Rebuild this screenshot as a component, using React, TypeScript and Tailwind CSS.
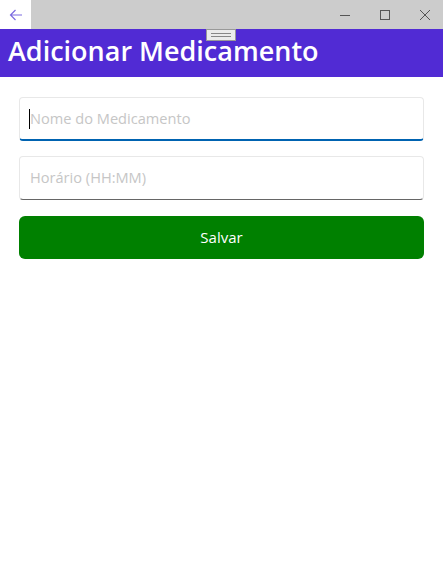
import React from "react";

const TitleBar = () => {
    return (
        <div className="flex h-[29px] items-stretch bg-[#cccccc]">
            <div className="flex w-[31px] items-center justify-center bg-white">
                <svg width="14" height="12" viewBox="0 0 14 12" fill="none" stroke="#7b6be0" strokeWidth="1.2">
                    <path d="M13 6H1.5M6.5 1L1.5 6l5 5" />
                </svg>
            </div>
            <div className="flex flex-1 items-center justify-end gap-[30px] pr-[13px]">
                <svg width="10" height="10" viewBox="0 0 10 10" stroke="#555" strokeWidth="1">
                    <path d="M0 5.5h10" />
                </svg>
                <svg width="10" height="10" viewBox="0 0 10 10" fill="none" stroke="#555" strokeWidth="1">
                    <rect x="0.5" y="0.5" width="9" height="9" />
                </svg>
                <svg width="10" height="10" viewBox="0 0 10 10" stroke="#555" strokeWidth="1">
                    <path d="M0 0l10 10M10 0L0 10" />
                </svg>
            </div>
        </div>
    )
}

const App = () => {
    return (
        <div className="h-[578px] w-[443px] bg-white font-['Open_Sans',sans-serif]">
            <TitleBar />

            <header className="relative h-[48px] bg-[#512bd4] pl-[8px]">
                <h1 className="pt-[2px] text-[27px] leading-[40px] font-semibold text-white">Adicionar Medicamento</h1>
                <div className="absolute top-0 left-[206px] flex h-[12px] w-[30px] flex-col items-center justify-center gap-[2px] border border-[#999] bg-[#ececec]">
                    <div className="h-px w-[20px] bg-[#888]" />
                    <div className="h-px w-[20px] bg-[#888]" />
                </div>
            </header>

            <div className="flex flex-col px-[19px] pt-[20px]">
                <div className="relative flex h-[44px] items-center rounded-[4px] border border-b-2 border-[#e8e8e8] border-b-[#0063b1] pl-[10px]">
                    <span className="absolute top-[11px] left-[9px] h-[20px] w-px bg-black" />
                    <span className="text-[14.6px] text-[#c6c6c6]">Nome do Medicamento</span>
                </div>
                <div className="mt-[15px] flex h-[44px] items-center rounded-[4px] border border-[#e8e8e8] border-b-[#666666] pl-[10px]">
                    <span className="text-[14.6px] text-[#c6c6c6]">Horário (HH:MM)</span>
                </div>
                <button type="button" className="mt-[16px] h-[43px] rounded-[6px] bg-[#008000] text-[15px] text-white">Salvar</button>
            </div>
        </div>
    )
}
export default App
